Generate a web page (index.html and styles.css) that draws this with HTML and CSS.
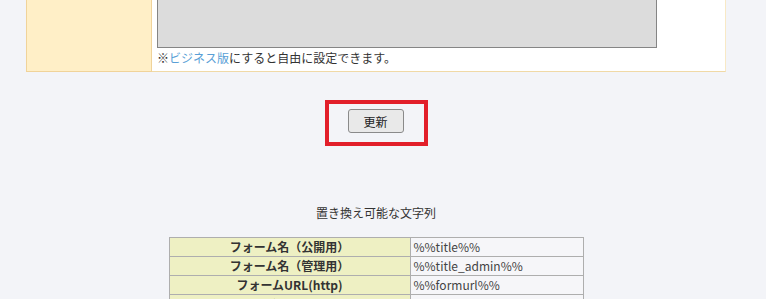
FILE: index.html
```html
<html><head><meta http-equiv="Content-Type" content="text/html; charset=UTF-8">
    <link rel="stylesheet" href="styles.css">
    <title>フォーム設定</title>
</head>

<body>
    <div class="wrap">
        <table class="settings">
            <tr>
                <th class="label"></th>
                <td class="field">
                    <textarea disabled></textarea>
                    <p class="note">※<a href="#">ビジネス版</a>にすると自由に設定できます。</p>
                </td>
            </tr>
        </table>

        <div class="actions">
            <span class="mark"><button>更新</button></span>
        </div>

        <h3 class="caption">置き換え可能な文字列</h3>

        <table class="vars">
            <tr><th>フォーム名（公開用）</th><td>%%title%%</td></tr>
            <tr><th>フォーム名（管理用）</th><td>%%title_admin%%</td></tr>
            <tr><th>フォームURL(http)</th><td>%%formurl%%</td></tr>
            <tr><th>フォームURL(https)</th><td>%%formurl_ssl%%</td></tr>
        </table>
    </div>
</body></html>
```

FILE: styles.css
```css
* {}

body {
    margin: 0;
    background: #f3f4f8;
    color: #333;
    font-family: "Noto Sans CJK JP", "Noto Sans", sans-serif;
    font-size: 12px;
}

.wrap {
    width: 700px;
    margin-left: 26px;
    margin-top: -60px;
}

.settings {
    width: 700px;
    border-collapse: separate;
    border-spacing: 0;
    font-size: 12px;
}

.settings .label {
    width: 124px;
    padding: 0;
    background: #ffefc7;
    border-left: 1px solid #f0d39a;
    border-right: 1px solid #f0d39a;
    border-bottom: 1px solid #f0d39a;
}

.settings .field {
    padding: 4px 0 4px 5px;
    background: #fff;
    border-right: 1px solid #f8e9c6;
    border-bottom: 1px solid #f0d9a6;
}

textarea {
    display: block;
    box-sizing: border-box;
    width: 500px;
    height: 104px;
    margin: 0;
    background: #dcdcdc;
    border: 1px solid #858585;
    resize: none;
}

.note {
    margin: 1px 0 0 0;
    font-size: 12px;
    line-height: 18px;
    color: #333;
}

.note a {
    color: #5a9fd6;
    text-decoration: none;
}

.actions {
    display: flex;
    justify-content: center;
    margin-top: 28px;
}

.mark {
    display: block;
    border: 4px solid #e21f2a;
    padding: 5px 20px 9px 19px;
}

button {
    display: block;
    width: 56px;
    height: 24px;
    padding: 0;
    background: #e9e9e9;
    border: 1px solid #8a8a8a;
    border-radius: 3px;
    color: #222;
    font-family: "Noto Sans CJK JP", sans-serif;
    font-size: 12px;
}

.caption {
    margin: 58px 0 0 0;
    font-size: 12px;
    font-weight: normal;
    line-height: 18px;
    text-align: center;
    color: #333;
}

.vars {
    width: 415px;
    margin: 15px auto 0 auto;
    border-collapse: collapse;
    font-size: 12px;
}

.vars th,
.vars td {
    height: 19px;
    padding: 0 3px;
    border: 1px solid #aeaeae;
    line-height: 18px;
    font-size: 12px;
}

.vars th {
    width: 234px;
    background: #eef0c3;
    color: #333;
    text-align: center;
}

.vars td {
    background: #f6f6f9;
    text-align: left;
    color: #444;
}
```
